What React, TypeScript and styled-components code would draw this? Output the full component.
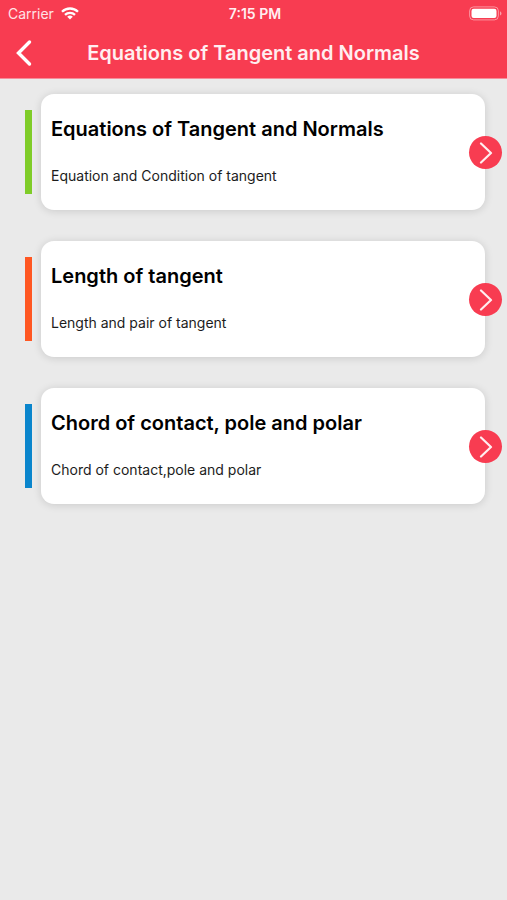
import React from 'react';
import styled, { createGlobalStyle } from 'styled-components';

const Global = createGlobalStyle`
  * { box-sizing: border-box; }
  body { margin: 0; background: #eaeaea; font-family: Inter, "Liberation Sans", sans-serif; }
`;

const Header = styled.header`
  background: #f83c51;
  border-bottom: 1px solid #f58d9a;
  color: #fff;
`;

const StatusBar = styled.div`
  display: grid;
  grid-template-columns: 1fr auto 1fr;
  align-items: center;
  height: 27px;
  padding: 0 5px 0 8px;
  font-size: 14px;
`;

const Carrier = styled.div`
  display: flex;
  align-items: center;
  gap: 7px;
  color: #ffe3e6;
`;

const Time = styled.time`
  color: #ffeef0;
  font-weight: 600;
`;

const Battery = styled.svg`
  justify-self: end;
`;

const NavBar = styled.div`
  display: grid;
  grid-template-columns: 48px 1fr 48px;
  align-items: center;
  height: 51px;
`;

const BackButton = styled.button`
  display: flex;
  align-items: center;
  justify-content: center;
  height: 48px;
  padding: 0;
  border: 0;
  background: none;
  color: inherit;
  cursor: pointer;
`;

const PageTitle = styled.h1`
  margin: 0;
  color: #ffeef0;
  text-align: center;
  font-size: 20px;
  font-weight: 600;
  white-space: nowrap;
`;

const TopicList = styled.ul`
  display: flex;
  flex-direction: column;
  gap: 31px;
  margin: 0;
  padding: 15px 22px 15px 25px;
  list-style: none;
`;

const Topic = styled.li`
  display: flex;
  align-items: center;
  gap: 9px;
`;

const Accent = styled.span<{ $color: string }>`
  flex: none;
  width: 7px;
  height: 84px;
  background: ${(p) => p.$color};
`;

const Card = styled.article`
  position: relative;
  flex: 1;
  min-height: 116px;
  padding: 21px 32px 20px 10px;
  border-radius: 13px;
  background: #fff;
  color: #000;
  box-shadow: 0 1px 8px rgba(0, 0, 0, 0.14);
`;

const TopicTitle = styled.h2`
  margin: 0 0 21px;
  font-size: 20px;
  font-weight: 600;
  line-height: 28px;
`;

const Description = styled.p`
  margin: 0;
  color: #1c1c1c;
  font-size: 14px;
  line-height: 24px;
`;

const OpenButton = styled.button`
  position: absolute;
  top: 50%;
  right: -17px;
  display: flex;
  align-items: center;
  justify-content: center;
  width: 33px;
  height: 33px;
  margin-top: -16px;
  padding: 0;
  border: 0;
  border-radius: 50%;
  background: #f83c51;
  color: #ffeef0;
  cursor: pointer;
`;

const topics = [
  { title: 'Equations of Tangent and Normals', text: 'Equation and Condition of tangent', color: '#7fcc28' },
  { title: 'Length of tangent', text: 'Length and pair of tangent', color: '#ff5722' },
  { title: 'Chord of contact, pole and polar', text: 'Chord of contact,pole and polar', color: '#0a85cc' },
];

export default function App() {
  return (
    <>
      <Global />
      <Header>
        <StatusBar>
          <Carrier>
            Carrier
            <svg width="18" height="13" viewBox="0 0 18 13" fill="none" stroke="#fff" strokeWidth="2.3" aria-hidden="true">
              <path d="M1 4.800a11.400 11.400 0 0 1 16 0M4 7.900a7.200 7.200 0 0 1 10 0" />
              <path d="M9 12.600 6.200 9.800a4 4 0 0 1 5.600 0Z" fill="#fff" stroke="none" />
            </svg>
          </Carrier>
          <Time>7:15 PM</Time>
          <Battery width="33" height="15" viewBox="0 0 33 15" role="img" aria-label="Battery full">
            <rect x="0.6" y="0.9" width="28.8" height="13" rx="4" fill="none" stroke="#fff" strokeOpacity="0.45" />
            <rect x="2.5" y="2.8" width="25" height="9.2" rx="2.2" fill="#fff" />
            <path d="M31 5.200c2 .8 2 3.600 0 4.400Z" fill="#fff" fillOpacity="0.5" />
          </Battery>
        </StatusBar>
        <NavBar>
          <BackButton aria-label="Back">
            <svg width="18" height="28" viewBox="0 0 18 28" fill="none" stroke="currentColor" strokeWidth="3.4" strokeLinecap="round" aria-hidden="true">
              <path d="M14.500 3 3.500 14l11 11" />
            </svg>
          </BackButton>
          <PageTitle>Equations of Tangent and Normals</PageTitle>
        </NavBar>
      </Header>
      <main>
        <TopicList>
          {topics.map((t) => (
            <Topic key={t.title}>
              <Accent $color={t.color} />
              <Card>
                <TopicTitle>{t.title}</TopicTitle>
                <Description>{t.text}</Description>
                <OpenButton aria-label={`Open ${t.title}`}>
                  <svg width="14" height="22" viewBox="0 0 14 22" fill="none" stroke="currentColor" strokeWidth="2.2" strokeLinecap="round" strokeLinejoin="round" aria-hidden="true">
                    <path d="m2 1.500 10 9.500L2 20.500" />
                  </svg>
                </OpenButton>
              </Card>
            </Topic>
          ))}
        </TopicList>
      </main>
    </>
  );
}
